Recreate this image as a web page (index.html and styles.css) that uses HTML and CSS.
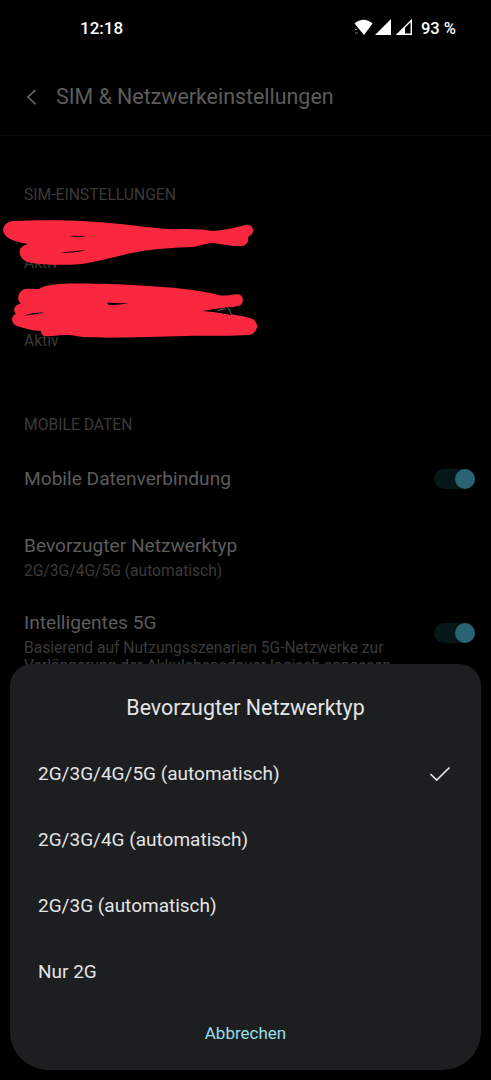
FILE: index.html
```html
<!DOCTYPE html>
<html lang="de">
<head>
    <meta charset="UTF-8">
    <meta name="viewport" content="width=device-width, initial-scale=1.0">
    <title>SIM &amp; Netzwerkeinstellungen</title>
    <link rel="stylesheet" href="styles.css">
</head>
<body>
    <div class="statusbar">
        <span class="time">12:18</span>
        <div class="status-icons">
            <svg width="64" height="20" viewBox="0 0 64 20">
                <path d="M0.500 5.500 Q9.500 -2 18.500 5.500 L10 17 Z" fill="#fff"/>
                <path d="M1 11.500h2M1 15h3" stroke="#777" stroke-width="1"/>
                <path d="M37 1 V17 H21 Z" fill="#fff"/>
                <path d="M57.300 2.500 V16.300 H43.500 Z" fill="none" stroke="#fff" stroke-width="1.400"/>
                <path d="M51 8.500 V17 H42 Z" fill="#fff"/>
            </svg>
            <span class="battery">93 %</span>
        </div>
    </div>

    <div class="header">
        <svg class="back" width="12" height="18" viewBox="0 0 12 18">
            <path d="M9.500 1.800 L2 9 L9.500 16.200" fill="none" stroke="#666" stroke-width="1.600"/>
        </svg>
        <h1>SIM &amp; Netzwerkeinstellungen</h1>
    </div>

    <div class="settings">
        <h2>SIM-EINSTELLUNGEN</h2>
        <div class="sims">
            <div class="row">
                <div class="text">
                    <div class="name"></div>
                    <div class="info">Aktiv</div>
                </div>
            </div>
            <div class="row">
                <div class="text">
                    <div class="name"></div>
                    <div class="info">Aktiv</div>
                </div>
            </div>
            <!-- Namen und Nummern geschwärzt -->
            <svg class="marker" width="270" height="130" viewBox="0 215 270 130">
                <path fill="#f9283f" d="M13 221 C35 220 70 220 90 221.500 C120 223 150 228 173 229.300 C190 228.500 203 229 213 231 C225 230 238 227 246 224.700 C252 224 255 230 252 234 C250 236 248 236 248 238 C249 242 246 246 241 246.300 C232 246.500 222 244 213 243 C205 243.500 200 246 193 247 C175 247.500 155 249 140 251.500 C120 255 100 261 82 264 C65 265.500 42 265 29 262.500 C20 260 17 251 22 247 C24 245 26 244.500 28 244 C18 242 6 240 3.500 232 C2 226 7 221.500 13 221 Z"/>
                <path fill="#f9283f" d="M25 289 C31 288.300 35 289 39 289 C44 285.500 52 284.500 60 284 C80 283 115 284 140 285.500 C170 287 200 290 221 295.500 C228 296 234 293.500 239 294.300 C244 296 244 303 240 305.500 C230 308 220 309 207 311 C225 313.500 240 315 250 318 C260 321 259 333 249 335 C225 336.500 205 335 185 336 C150 337 110 338.500 83 337 C77 336 71 334.500 65 335 C56 335.500 50 336.500 44 336 C42 335 41 333 41 331 C33 331 24 328 17 326 C10 323 11 315.500 16 314 C12 310 15 304.500 21 303.500 C16 300 18 291 25 289 Z"/>
                <path fill="#000" d="M69 236 Q76 235 86 236.700 Q76 237.500 69 236 Z M60 252.600 Q70 251.500 86 249.900 Q76 253.200 60 252.600 Z M107 302.500 Q118 303.500 129 303 Q118 305.500 109 305 Z M24 315.500 Q33 312 44 312.500 Q40 314 24 315.500 Z M202 311 Q216 308.500 222 308 L231 306.800 V315 Q216 311.500 202 311 Z"/>
                <path fill="none" stroke="#555" stroke-width="1.200" d="M218 311 Q222 307.500 226 309.500 M227.500 307.500 Q230.500 310 231 314 M38 312 L39.500 313.500"/>
            </svg>
        </div>

        <h2>MOBILE DATEN</h2>
        <div class="row">
            <div class="text">
                <div class="name">Mobile Datenverbindung</div>
            </div>
            <span class="switch"></span>
        </div>
        <div class="row">
            <div class="text">
                <div class="name">Bevorzugter Netzwerktyp</div>
                <div class="info">2G/3G/4G/5G (automatisch)</div>
            </div>
        </div>
        <div class="row row-long">
            <div class="text">
                <div class="name">Intelligentes 5G</div>
                <div class="info">Basierend auf Nutzungsszenarien 5G-Netzwerke zur<br>Verlängerung der Akkulebensdauer logisch anpassen</div>
            </div>
            <span class="switch"></span>
        </div>
    </div>

    <div class="sheet">
        <h3>Bevorzugter Netzwerktyp</h3>
        <ul>
            <li>
                <span>2G/3G/4G/5G (automatisch)</span>
                <svg width="22" height="16" viewBox="0 0 22 16">
                    <path d="M1.500 8 L7.700 14 L20.500 1.500" fill="none" stroke="#e6e6e8" stroke-width="1.700"/>
                </svg>
            </li>
            <li><span>2G/3G/4G (automatisch)</span></li>
            <li><span>2G/3G (automatisch)</span></li>
            <li><span>Nur 2G</span></li>
        </ul>
        <button class="cancel">Abbrechen</button>
    </div>
</body>
</html>
```

FILE: styles.css
```css
* {
    box-sizing: border-box;
}

body {
    margin: 0;
    height: 1080px;
    overflow: hidden;
    position: relative;
    background: #000;
    color: #5c5c5c;
    font-family: Roboto, sans-serif;
}

h1, h2, h3, ul {
    margin: 0;
    padding: 0;
    font-weight: 400;
}

.statusbar {
    display: flex;
    justify-content: space-between;
    align-items: center;
    height: 56px;
    padding: 0 35px 0 80px;
    color: #fff;
    font-size: 17px;
    font-weight: 500;
}

.status-icons {
    display: flex;
    align-items: center;
    gap: 3px;
}

.battery {
    font-size: 16.5px;
}

.header {
    display: flex;
    align-items: center;
    gap: 18px;
    height: 80px;
    padding: 2px 0 0 26px;
    border-bottom: 1px solid #0a0a0a;
}

h1 {
    font-size: 21.4px;
}

.settings {
    padding: 48px 16px 0 24px;
}

h2 {
    height: 26px;
    line-height: 21px;
    font-size: 15.7px;
    letter-spacing: -0.02px;
    color: #3a3a3a;
}

.sims {
    position: relative;
    margin-bottom: 48px;
}

.marker {
    position: absolute;
    left: -24px;
    top: 5px;
}

.row {
    display: flex;
    justify-content: space-between;
    align-items: center;
    height: 78px;
    padding-bottom: 1px;
}

.name {
    height: 24px;
    line-height: 24px;
    font-size: 19.15px;
}

.info {
    margin-top: 4px;
    line-height: 18px;
    font-size: 15.6px;
    color: #3a3a3a;
}

.row-long {
    align-items: flex-start;
    padding-top: 15px;
}

.row-long .switch {
    margin-top: 12px;
}

.switch {
    display: flex;
    justify-content: flex-end;
    width: 41px;
    height: 20px;
    border-radius: 10px;
    background: #06171a;
}

.switch::after {
    content: "";
    width: 20px;
    height: 20px;
    border-radius: 50%;
    background: #2a6473;
}

/* Auswahl über den Einstellungen */
.sheet {
    position: absolute;
    left: 10px;
    right: 10px;
    top: 664px;
    height: 406px;
    padding-top: 29px;
    border-radius: 22px 22px 38px 38px;
    background: #1d1e20;
    color: #e4e4e6;
    text-align: center;
}

h3 {
    height: 48px;
    line-height: 30px;
    font-size: 21.4px;
}

ul {
    list-style: none;
}

li {
    display: flex;
    justify-content: space-between;
    align-items: center;
    height: 65.8px;
    padding: 0 30px 0 28px;
    font-size: 19px;
}

.cancel {
    margin-top: 15px;
    padding: 4px 16px;
    border: 0;
    background: none;
    color: #96dfe8;
    font-family: inherit;
    font-size: 17px;
}
```
